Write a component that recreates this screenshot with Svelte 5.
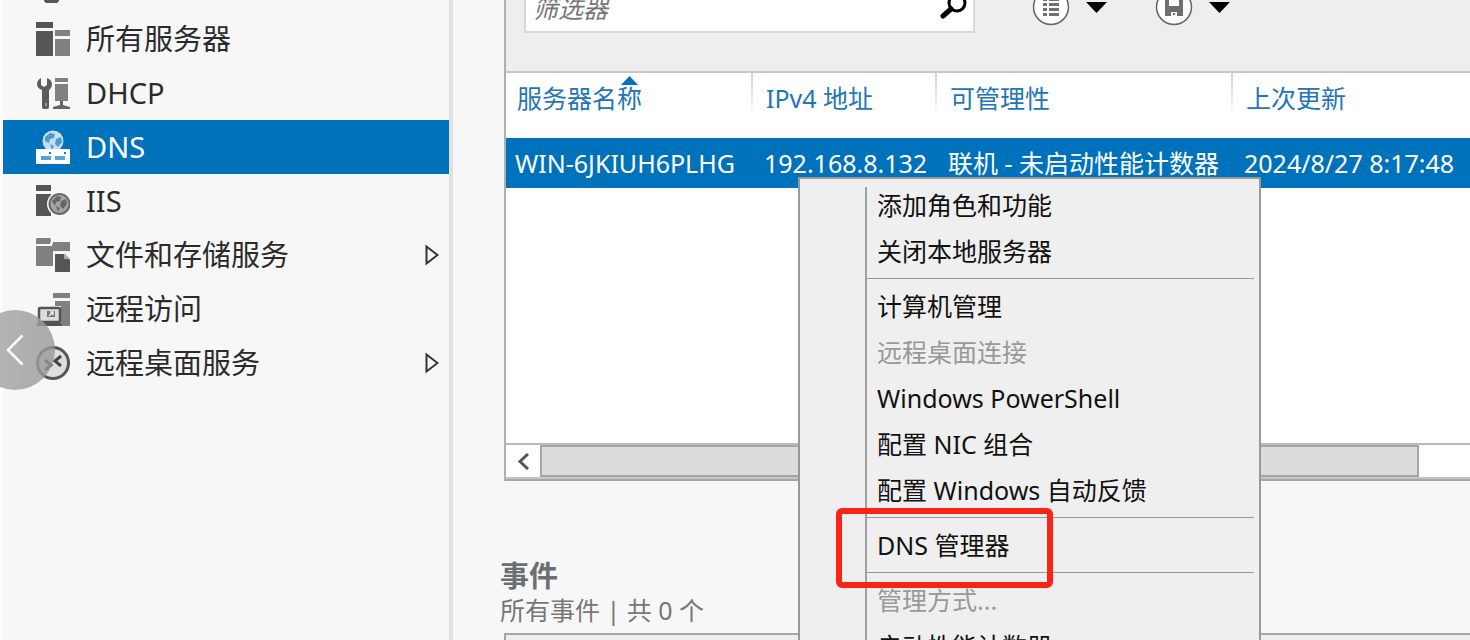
<script>
  const nav = [
    { id: 'all', label: '所有服务器' },
    { id: 'dhcp', label: 'DHCP' },
    { id: 'dns', label: 'DNS' },
    { id: 'iis', label: 'IIS' },
    { id: 'files', label: '文件和存储服务', more: true },
    { id: 'remote', label: '远程访问' },
    { id: 'rds', label: '远程桌面服务', more: true }
  ];
  let selected = $state('dns');
  let filter = $state('');

  const menu = [
    [{ label: '添加角色和功能' }, { label: '关闭本地服务器' }],
    [
      { label: '计算机管理' },
      { label: '远程桌面连接', disabled: true },
      { label: 'Windows PowerShell' },
      { label: '配置 NIC 组合' },
      { label: '配置 Windows 自动反馈' }
    ],
    [{ label: 'DNS 管理器', marked: true }],
    [{ label: '管理方式...', disabled: true }, { label: '启动性能计数器' }]
  ];
</script>

<div class="app">
  <nav class="side" aria-label="服务器">
    <div class="stub"><svg width="18" height="3" viewBox="0 0 18 3"><path d="M1 0h15v1l-2 2H3L1 1z" fill="#555" /></svg></div>
    {#each nav as item (item.id)}
      <button class="nav-item" class:selected={selected === item.id} onclick={() => (selected = item.id)}>
        <svg class="nav-icon" width="34" height="34" viewBox="0 0 34 34" aria-hidden="true">
          {#if item.id === 'all'}
            <path fill="#555" d="M0 0h17v6H0zM0 9h17v25H0z" />
            <path fill="#808080" d="M19 8h15v6H19zM19 17h15v17H19z" />
          {:else if item.id === 'dhcp'}
            <path fill="#5c5c5c" d="M5 2v7l3 2 3-2V2c3 1 5 3.500 5 6 0 3-1.500 5-3 6v17q0 2-2 2H8q-2 0-2-2V14C3 13 1 11 1 8s2-5 4-6z" />
            <path fill="#999" d="M9 27h2v3H9z" />
            <path fill="#808080" d="M19 2h13v4H19zM19 8h13v17H19z" />
            <path fill="#666" d="M24 25h3v4l7 2v2H17v-2l7-2z" />
          {:else if item.id === 'dns'}
            <circle cx="17" cy="11" r="10.500" fill="#c3e0f3" />
            <path fill="#4b9bd0" d="M9 7l5-4 5 1-1 4-4 1-1 4-4-2zM20 9l5-2 1 5-4 5-3-3zM14 14l4 2-2 4z" />
            <path fill="#fff" d="M0 19h34v15H0z" />
            <path fill="#58a5d5" d="M5 26h10v4H5zM19 26h10v4H19z" />
            <path fill="#1979ba" d="M13 22h2v2h-2zM28 22h2v2h-2z" />
          {:else if item.id === 'iis'}
            <path fill="#555" d="M0 1h15v6H0zM0 10h15v22H0z" />
            <circle cx="23.500" cy="20" r="12.500" fill="#f7f7f7" />
            <circle cx="23.500" cy="20" r="10" fill="#a5a5a5" stroke="#6a6a6a" stroke-width="2" />
            <path fill="#666" d="M16 17l5-5 4 1-1 4-4 1-1 4zM25 17l5-2 1 5-4 5-3-3zM20 22l4 2-2 4z" />
          {:else if item.id === 'files'}
            <path fill="#808080" d="M1 0h13l1 2-1 4H0V1zM0 8h16l1-4h17v24H0z" />
            <path fill="#f7f7f7" d="M17 13h17v21H17z" />
            <path fill="#555" d="M19 16h9l6 6v12H19z" />
            <path fill="#aaa" d="M28 15v6h6z" />
          {:else if item.id === 'remote'}
            <path fill="#808080" d="M17 1h17v5H17zM19 9h15v25H25V14h-6z" />
            <rect x="3" y="16" width="21" height="14" rx="1" fill="#ddd" stroke="#555" stroke-width="2.500" />
            <path fill="#777" d="M11 19h8v6h-8z" />
            <path fill="none" stroke="#eee" stroke-width="1.500" d="M13 24l4-4M14 20h3v3" />
            <path fill="#555" d="M2 31h23l1 3H0z" />
          {:else}
            <circle cx="17" cy="17" r="15.500" fill="#dedede" stroke="#555" stroke-width="3" />
            <path fill="none" stroke="#444" stroke-width="3" d="M9 14l6 5-6 5M25 10l-6 5 6 5" />
          {/if}
        </svg>
        <span class="nav-label">{item.label}</span>
        {#if item.more}
          <svg width="14" height="22" viewBox="0 0 14 22" aria-hidden="true"><path d="M1.500 2.500v17L12.500 11z" fill="none" stroke="#333" stroke-width="2" /></svg>
        {/if}
      </button>
    {/each}
  </nav>

  <main>
    <section class="panel">
      <div class="toolbar">
        <label class="search">
          <input type="text" placeholder="筛选器" aria-label="筛选器" bind:value={filter} />
          <svg width="28" height="32" viewBox="0 0 28 32" aria-hidden="true"><circle cx="17" cy="11" r="8" fill="none" stroke="#000" stroke-width="3" /><path d="M11 17l-8 7" stroke="#000" stroke-width="5" stroke-linecap="round" /></svg>
        </label>
        <button class="tool" aria-label="视图">
          <svg width="38" height="38" viewBox="0 0 38 38"><circle cx="19" cy="19" r="17.500" fill="#fff" stroke="#666" stroke-width="1.500" /><path fill="#707070" d="M11 10h4v3h-4zM17 10h10v3H17zM11 15h4v3h-4zM17 15h10v3H17zM11 20h4v3h-4zM17 20h10v3H17zM11 25h4v3h-4zM17 25h10v3H17z" /></svg>
          <svg width="21" height="11" viewBox="0 0 21 11"><path d="M0 0h21L10.500 11z" /></svg>
        </button>
        <button class="tool" aria-label="保存">
          <svg width="38" height="38" viewBox="0 0 38 38"><circle cx="19" cy="19" r="17.500" fill="#fff" stroke="#666" stroke-width="1.500" /><path fill="#707070" fill-rule="evenodd" d="M10 9h18v19H10zM14 11v7h10v-7zM16 24v4h6v-4z" /><path fill="#707070" d="M18 25h2v2h-2z" /></svg>
          <svg width="21" height="11" viewBox="0 0 21 11"><path d="M0 0h21L10.500 11z" /></svg>
        </button>
      </div>

      <div class="grid">
        <table>
          <colgroup><col class="c1" /><col class="c2" /><col class="c3" /><col /></colgroup>
          <thead>
            <tr>
              <th>服务器名称<svg class="sort" width="17" height="9" viewBox="0 0 17 9" aria-hidden="true"><path d="M8.500 0L17 9H0z" fill="#0072bc" /></svg></th>
              <th>IPv4 地址</th><th>可管理性</th><th>上次更新</th>
            </tr>
          </thead>
          <tbody>
            <tr><td>WIN-6JKIUH6PLHG</td><td>192.168.8.132</td><td>联机 - 未启动性能计数器</td><td>2024/8/27 8:17:48</td></tr>
          </tbody>
        </table>
      </div>

      <div class="scroll">
        <button class="scroll-left" aria-label="向左滚动"><svg width="12" height="17" viewBox="0 0 12 17"><path d="M11 1L3 8.500l8 7.500" fill="none" stroke="#555" stroke-width="3" /></svg></button>
        <div class="thumb"></div>
      </div>
    </section>

    <section class="events">
      <h2>事件</h2>
      <p>所有事件 | 共 0 个</p>
      <div class="events-box"></div>
    </section>
  </main>

  <div class="menu" role="menu">
    <div class="menu-body">
      {#each menu as group, i}
        {#if i > 0}<hr />{/if}
        {#each group as item}
          <button role="menuitem" class:marked={item.marked} disabled={item.disabled}>{item.label}</button>
        {/each}
      {/each}
    </div>
  </div>

  <button class="prev" aria-label="上一张"><svg width="18" height="32" viewBox="0 0 18 32"><path d="M16.500 1.500L2 16l14.500 14.500" fill="none" stroke="#fff" stroke-width="2.500" /></svg></button>
</div>

<style>
  :global(body) { margin: 0; }
  .app {
    position: relative;
    display: grid;
    grid-template-columns: 453px minmax(0, 1fr);
    height: 100vh;
    overflow: hidden;
    background: #f7f7f7;
    color: #111;
    font: 25px/34px "Noto Sans", "Noto Sans CJK SC", sans-serif;
  }
  button { border: 0; margin: 0; padding: 0; background: none; font: inherit; color: inherit; text-align: left; }
  svg { display: block; flex: none; }

  .side { border-left: 3px solid #fcfcfc; border-right: 4px solid #e1e1e1; }
  .stub { height: 12px; padding-left: 40px; }
  .nav-item {
    display: flex;
    align-items: center;
    gap: 16px;
    width: 100%;
    height: 54px;
    padding: 0 10px 0 33px;
    font-size: 29px;
    color: #2b2b2b;
  }
  .nav-label { flex: 1; }
  .nav-item.selected { background: #0072bc; color: #fff; }

  main { padding-left: 51px; }
  .panel { border-left: 2px solid #b0b0b0; }
  .toolbar {
    display: flex;
    align-items: flex-start;
    height: 87px;
    margin-top: -14px;
    padding-left: 18px;
    box-sizing: border-box;
    background: #eee;
    border-bottom: 2px solid #c6c6c6;
  }
  .search {
    display: flex;
    align-items: center;
    width: 451px;
    height: 47px;
    margin-right: 57px;
    padding: 0 5px 4px 7px;
    box-sizing: border-box;
    background: #fff;
    border: 2px solid #d8d8d8;
  }
  .search input { flex: 1; min-width: 0; border: 0; padding: 0; outline: 0; background: none; font: inherit; font-style: italic; color: #333; }
  .search input::placeholder { color: #777; opacity: 1; }
  .tool { display: flex; align-items: center; gap: 16px; height: 42px; margin-right: 48px; }

  .grid { height: 370px; background: #fff; }
  table { width: 100%; border-collapse: collapse; table-layout: fixed; }
  .c1 { width: 247px; }
  .c2 { width: 184px; }
  .c3 { width: 296px; }
  th, td { padding: 0 0 0 11px; text-align: left; font-weight: 400; white-space: nowrap; }
  th {
    position: relative;
    height: 49px;
    padding-bottom: 16px;
    color: #2475b5;
    background: linear-gradient(#d0d0d0, #fff) right top / 2px 44px no-repeat;
  }
  th + th { padding-left: 13px; }
  th:last-child { background: none; }
  .sort { position: absolute; left: 115px; top: 3px; }
  tbody tr { height: 50px; background: #0072bc; color: #fff; }
  td:first-child { padding-left: 9px; }

  .scroll { display: flex; height: 38px; box-sizing: border-box; padding-bottom: 2px; background: #fff; border-top: 2px solid #bababa; border-bottom: 2px solid #a6a6a6; box-shadow: inset 0 -2px #c4c4c4; }
  .scroll-left { display: grid; place-items: center; width: 34px; }
  .thumb { width: 95%; max-width: 879px; box-sizing: border-box; background: #dcdcdc; border: 2px solid #a6a6a6; }

  .events { padding-top: 78px; }
  h2 { margin: 0 0 0 -4px; font-size: 29px; line-height: 34px; color: #6b6f73; }
  p { margin: 0 0 0 -4px; color: #777; }
  .events-box { height: 40px; margin-top: 6px; background: #eee; border: 2px solid #a6a6a6; border-right: 0; }

  .menu {
    position: absolute;
    left: 798px;
    top: 177px;
    width: 463px;
    box-sizing: border-box;
    padding: 4px 5px 4px 65px;
    background: #efefef;
    border: 2px solid #999;
  }
  .menu-body { background: linear-gradient(#a0a0a0, #a0a0a0) 0 4px / 2px 100% no-repeat; }
  .menu button { display: block; width: 100%; height: 46px; padding: 0 0 3px 12px; white-space: nowrap; }
  .menu button:disabled { color: #999; }
  hr { height: 1px; margin: 3px 0 5px 2px; border: 0; background: #999; }
  .menu .marked { position: relative; }
  .marked::after { content: ""; position: absolute; left: -29px; top: -15px; width: 205px; height: 68px; border: 6px solid #f92415; border-radius: 6px; }

  .prev { position: absolute; left: -25px; top: 310px; width: 80px; height: 80px; padding-left: 31px; border-radius: 50%; background: linear-gradient(90deg, rgba(175, 175, 175, 0.9), rgba(150, 150, 150, 0.78)); }
</style>
